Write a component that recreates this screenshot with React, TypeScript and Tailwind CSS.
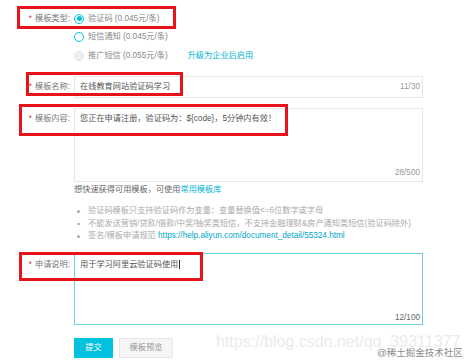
import React from "react";

function Label({ text, h }: { text: string; h: string }) {
  return (
    <div className={`w-[74px] shrink-0 flex items-center justify-end pr-[4px] ${h}`}>
      <span className="text-[#e4393c] mr-[3px]">*</span>
      <span className="text-[#777]">{text}</span>
    </div>
  );
}

function Radio({ state, label, extra }: { state: "on" | "off" | "disabled"; label: string; extra?: boolean }) {
  return (
    <div className="flex items-center h-[18.5px]">
      <div className="w-[10px] flex justify-center">
        {state === "on" && (
          <span className="w-[10px] h-[10px] rounded-full border border-[#00c1de] flex items-center justify-center">
            <span className="w-[5px] h-[5px] rounded-full bg-[#00c1de]" />
          </span>
        )}
        {state === "off" && <span className="w-[10px] h-[10px] rounded-full border border-[#00c1de] bg-white" />}
        {state === "disabled" && <span className="w-[10px] h-[10px] rounded-full border border-[#e4e4e4] bg-[#eeeeee]" />}
      </div>
      <span className={`ml-[4px] ${state === "disabled" ? "text-[#888]" : "text-[#888]"}`}>{label}</span>
      {extra && <span className="ml-[20px] text-[#00b5d6]">升级为企业后启用</span>}
    </div>
  );
}

export default function App() {
  return (
    <div className="relative w-[468px] h-[361px] overflow-hidden bg-white font-['Liberation_Sans','Noto_Sans_CJK_SC',sans-serif] text-[8.2px] leading-[12px] text-[#666]">
      <div className="pt-[9.5px]">
        {/* 模板类型 */}
        <div className="flex">
          <Label text="模板类型:" h="h-[18.5px]" />
          <div className="flex flex-col">
            <Radio state="on" label="验证码 (0.045元/条)" />
            <Radio state="off" label="短信通知 (0.045元/条)" />
            <Radio state="disabled" label="推广短信 (0.055元/条)" extra />
          </div>
        </div>

        {/* 模板名称 */}
        <div className="flex mt-[11px]">
          <Label text="模板名称:" h="h-[22px]" />
          <div className="w-[349px] h-[22px] border border-[#e6e6e6] flex items-center justify-between pl-[5px] pr-[2px]">
            <span className="text-[#555]">在线教育网站验证码学习</span>
            <span className="text-[#999]">11/30</span>
          </div>
        </div>

        {/* 模板内容 */}
        <div className="flex mt-[10px]">
          <Label text="模板内容:" h="h-[22px]" />
          <div className="flex flex-col">
            <div className="relative w-[349px] h-[74px] border border-[#e6e6e6] pl-[5px] pt-[4px]">
              <span className="text-[#555]">您正在申请注册，验证码为：${"{code}"}，5分钟内有效！</span>
              <span className="absolute right-[2px] bottom-[2px] text-[#999]">28/500</span>
            </div>
            <div className="mt-[2px] text-[#666]">
              想快速获得可用模板，可使用<span className="text-[#00b5d6]">常用模板库</span>
            </div>
            <div className="mt-[9px] flex flex-col text-[#aaa]">
              <div className="flex items-center h-[12.5px]">
                <span className="ml-[3px] w-[2.5px] h-[2.5px] rounded-full bg-[#aaa]" />
                <span className="ml-[8.5px]">验证码模板只支持验证码作为变量：变量替换值&lt;=6位数字或字母</span>
              </div>
              <div className="flex items-center h-[12.5px]">
                <span className="ml-[3px] w-[2.5px] h-[2.5px] rounded-full bg-[#aaa]" />
                <span className="ml-[8.5px] whitespace-nowrap">不能发送营销/贷款/借款/中奖/抽奖类短信，不支持金融理财&amp;房产通知类短信(验证码除外)</span>
              </div>
              <div className="flex items-center h-[12.5px]">
                <span className="ml-[3px] w-[2.5px] h-[2.5px] rounded-full bg-[#aaa]" />
                <span className="ml-[8.5px] whitespace-nowrap">
                  签名/模板申请规范 <span className="text-[#00a8cc]">https://help.aliyun.com/document_detail/55324.html</span>
                </span>
              </div>
            </div>
          </div>
        </div>

        {/* 申请说明 */}
        <div className="flex mt-[10.5px]">
          <Label text="申请说明:" h="h-[24px]" />
          <div className="flex flex-col">
            <div className="relative w-[349px] h-[72px] border border-[#6fd0e0] pl-[5px] pt-[5px]">
              <span className="text-[#555]">用于学习阿里云验证码使用</span>
              <span className="inline-block w-px h-[9px] bg-[#333] align-middle ml-[1px]" />
              <span className="absolute right-[2px] bottom-0 text-[#666]">12/100</span>
            </div>
            <div className="mt-[13px] flex gap-[6px]">
              <div className="w-[39px] h-[20px] bg-[#00c1de] text-white flex items-center justify-center">提交</div>
              <div className="w-[54px] h-[20px] bg-[#f5f5f5] border border-[#e8e8e8] text-[#999] flex items-center justify-center">模板预览</div>
            </div>
          </div>
        </div>
      </div>

      {/* annotation boxes */}
      <div className="absolute left-[17px] top-[6px] w-[159px] h-[23px] border-[3px] border-[#e8141b]" />
      <div className="absolute left-[26px] top-[72px] w-[157px] h-[24px] border-[3px] border-[#e8141b]" />
      <div className="absolute left-[19px] top-[104px] w-[269px] h-[32px] border-[3px] border-[#e8141b]" />
      <div className="absolute left-[19px] top-[252px] w-[184px] h-[29px] border-[3px] border-[#e8141b]" />

      {/* watermarks */}
      <div className="absolute left-[216px] top-[334px] text-[16px] leading-[16px] text-[#ebebeb] whitespace-nowrap font-['Liberation_Sans',sans-serif]">
        https://blog.csdn.net/qq_39311377
      </div>
      <div className="absolute left-[377px] top-[347px] text-[9.5px] leading-[12px] text-[#8a8a8a] whitespace-nowrap">
        @稀土掘金技术社区
      </div>
    </div>
  );
}
